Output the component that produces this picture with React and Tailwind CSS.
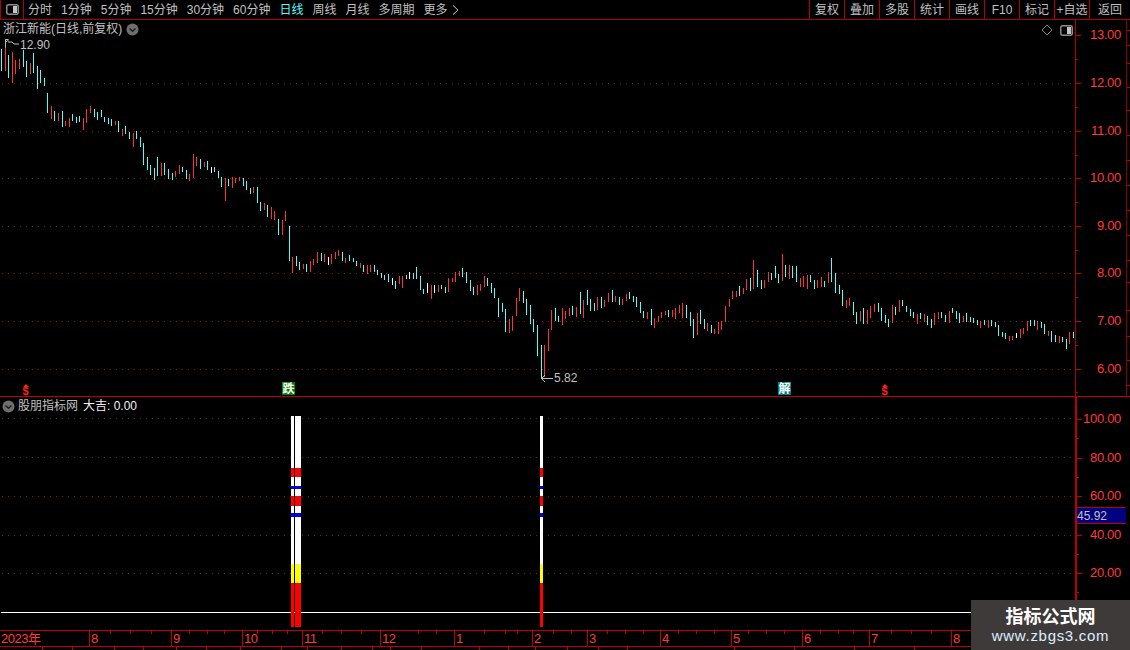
const FONT = '"Liberation Sans", "Noto Sans CJK SC", sans-serif';

// x, top, bottom in 3x crop pixels; c=cyan r=red w=white
const z7 = `4,57,122,c 16,35,125,r 26,75,145,c 37,66,158,r 46,90,132,r 58,87,117,r 70,60,110,c 80,93,140,c 91,99,131,r 100,69,129,c 112,108,177,c 122,120,160,c 133,144,167,c 142,189,248,c 154,228,266,r 164,243,272,c 175,249,272,r 187,243,290,c 196,273,288,r 208,264,291,r 217,252,272,c 229,261,279,c 238,258,276,c 250,264,300,r 259,237,279,r 271,228,249,r 283,237,261,c 292,246,270,c 304,240,261,c 313,261,276,c 325,264,282,c 334,267,288,c 346,273,285,r 355,273,306,c 367,297,318,r 376,288,312,c 388,306,327,c 400,309,351,r 409,303,327,c 421,321,351,c 430,339,405,c 442,381,420,c 451,405,435,c 463,414,450,c 472,381,438,c 484,399,438,r 493,399,435,c 505,417,447,c 517,429,450,c 526,423,441,r 538,405,432,r 547,411,426,c 559,420,447,c 568,432,453,r 580,372,444,r 589,381,408,r 601,387,417,c 613,396,411,r 622,393,420,c 634,411,429,w 643,411,426,c 655,423,444,c 664,441,471,c 676,444,513,r 685,447,468,c 697,441,474,r 706,444,459,r 718,441,453,r 730,444,468,c 739,453,480,c 751,474,492,c 760,471,489,r 772,471,519,c 781,516,543,c 793,519,540,r 802,525,561,c 814,531,567,r 823,543,570,r 835,567,615,c 847,570,615,r 856,543,573,r`;
const z10 = `28,-12,93,c 37,81,129,r 49,78,108,c 58,96,120,c 70,102,117,r 79,102,126,c 91,93,126,r 100,87,105,r 112,66,99,r 124,69,93,c 133,72,96,r 145,81,105,w 154,72,102,r 166,66,87,r 175,60,78,r 187,66,93,c 196,84,99,r 208,75,93,c 220,84,96,c 229,93,108,c 241,99,114,r 250,105,126,c 262,105,132,r 271,105,126,r 283,105,126,c 292,120,135,c 304,129,144,c 313,135,150,c 325,132,156,c 337,144,165,w 346,153,177,c 358,138,162,r 367,138,174,r 379,135,147,c 388,126,147,w 400,129,147,c 409,111,147,c 421,138,180,c 430,177,192,c 442,159,189,w 454,165,207,r 463,165,189,w 475,165,186,r 484,165,177,c 496,171,189,c 505,144,186,r 517,144,156,r 526,126,156,r 538,123,138,r 547,114,141,c 559,126,159,c 571,150,183,c 580,171,195,c 592,165,195,r 601,162,183,r 613,138,171,r 622,144,168,c 634,159,189,c 643,174,204,c 655,204,261,c`;
const z8 = `7,159,186,c 16,177,246,c 28,207,249,r 37,198,243,r 49,144,198,r 58,114,153,r 70,123,159,c 79,147,195,c 91,165,222,c 100,207,246,c 112,225,318,c 124,285,387,c 133,285,381,r 145,237,303,r 154,180,240,r 166,174,213,c 175,198,216,c 187,174,225,r 196,183,207,r 208,174,198,r 217,168,195,c 229,171,201,r 241,126,192,c 250,150,204,r 262,120,165,c 271,147,183,c 283,159,183,c 292,141,180,r 304,141,174,c 313,150,171,r 325,129,156,r 337,120,156,c 346,138,156,r 358,141,165,c 367,147,165,r 379,132,153,r 388,126,147,c 400,138,156,c 409,141,171,c 421,156,189,c 430,183,204,c 442,186,207,r 454,177,225,c 463,204,234,r 475,198,216,r 484,186,204,r 496,183,195,r 505,180,201,c 517,180,201,r 526,174,207,r 538,165,189,r 547,159,204,r 559,165,204,c 571,186,228,c 580,207,264,c 592,189,255,r 601,180,222,c 613,207,237,c 622,219,243,r 634,225,249,c 643,237,252,r 655,216,252,r 664,213,240,r 676,168,216,r 688,147,171,r 697,123,147,r 709,123,141,r 718,108,138,c 730,114,132,r 739,87,120,r 751,84,123,c 760,30,117,r 772,60,111,c 784,90,117,c 793,90,114,r 805,66,96,r 814,69,90,c 826,48,84,c 835,72,99,c`;
const z9 = `7,12,93,r 16,45,81,c 28,45,87,r 37,48,84,c 49,48,96,c 61,84,111,r 70,78,111,r 82,75,117,r 91,75,96,c 103,90,117,c 112,90,114,r 124,81,111,r 133,93,111,c 145,66,99,r 154,24,96,c 166,69,129,c 178,105,132,c 187,120,168,c 199,150,174,r 208,144,168,r 220,156,195,c 229,186,222,c 241,183,213,r 250,174,222,c 262,180,222,r 271,168,204,r 283,162,186,r 295,159,186,c 304,174,213,c 316,195,219,c 325,207,231,c 337,165,219,r 346,171,195,c 358,150,186,r 367,150,168,c 379,168,186,c 391,177,198,c 400,186,204,c 412,192,222,r 421,189,207,c 433,192,216,r 442,198,225,c 454,207,234,c 463,189,225,r 475,186,207,r 484,186,204,c 496,195,216,c 508,183,219,r 517,174,189,c 529,183,207,c 538,189,219,c 550,198,216,r 559,189,216,c 571,201,216,c 580,204,219,c 592,210,225,c 601,213,234,r 613,210,225,c 625,210,234,r 634,210,228,c 646,216,231,c 655,225,258,c 667,246,261,c 676,249,267,c 688,258,273,r 697,258,270,r 709,249,264,w 721,237,264,r 730,234,252,r 742,213,243,r 751,210,228,c 763,210,228,c 772,213,240,r 784,216,234,c 793,222,252,c 805,243,258,r 814,243,276,c 826,255,276,c 838,258,279,r 847,261,276,c 859,267,297,c 868,246,282,r 880,246,264,c`;

const COL = { c: '#54fcfc', r: '#ff3232', w: '#ffffff' };
const parse = (s, ox, oy) =>
  s.split(' ').map((t) => {
    const [x, a, b, c] = t.split(',');
    return { x: Math.floor(+x / 3) + ox, y: Math.floor(+a / 3) + oy, h: Math.round((+b - +a) / 3), c: COL[c] };
  });
const candles = [...parse(z7, 0, 30), ...parse(z10, 280, 230), ...parse(z8, 500, 250), ...parse(z9, 780, 250)];

const leftTabs = ['分时', '1分钟', '5分钟', '15分钟', '30分钟', '60分钟', '日线', '周线', '月线', '多周期', '更多'];
const rightTabs = ['复权', '叠加', '多股', '统计', '画线', 'F10', '标记', '+自选'];
const upperLabels = [['13.00', 35], ['12.00', 83], ['11.00', 131], ['10.00', 178], ['9.00', 226], ['8.00', 273], ['7.00', 321], ['6.00', 369]];
const lowerLabels = [['100.00', 419], ['80.00', 458], ['60.00', 496], ['40.00', 535], ['20.00', 573]];
const months = [['2023年', 89], ['8', 82], ['9', 71], ['10', 60], ['11', 78], ['12', 74], ['1', 78], ['2', 55], ['3', 73], ['4', 71], ['5', 71], ['6', 67], ['7', 82], ['8', 179]];
const footCells = [43, 30, 42, 29, 33, 30, 34, 41, 26, 34, 31, 18, 31, 58, 29, 27, 32, 31, 29, 107, 60, 60, 60, 60, 0];
const monthTicks = [110, 130, 151, 189, 207, 224, 257, 272, 287, 322, 341, 361, 418, 436, 484, 505, 517, 553, 571, 607, 625, 643, 678, 696, 714, 748, 766, 784, 820, 838, 853, 891, 911, 931];
const SEGS = [[416, 52, '#fff'], [468, 9, '#f00'], [477, 9, '#fff'], [486, 3, '#0000ff'], [489, 7, '#fff'], [496, 10, '#f00'], [506, 7, '#fff'], [513, 4, '#0000ff'], [517, 47, '#fff'], [564, 19, '#ff0'], [583, 44, '#f00']];

function Chevron({ className }) {
  return (
    <svg width="13" height="13" viewBox="0 0 13 13" className={className}>
      <circle cx="6.5" cy="6.5" r="6" fill="#6e6e6e" />
      <path d="M3.5 5.5 L6.5 8.2 L9.5 5.5" fill="none" stroke="#1c1c1c" strokeWidth="1.4" />
    </svg>
  );
}

function ToggleIcon() {
  return (
    <svg width="13" height="11" viewBox="0 0 13 11">
      <rect x="0.75" y="0.75" width="11.5" height="9.5" rx="2" fill="#000" stroke="#8c8c8c" strokeWidth="1.5" />
      <rect x="7" y="2" width="4" height="7" fill="#c4c4c4" />
    </svg>
  );
}

function Dots({ ys, y0 }) {
  return ys.map((y) => (
    <line key={y} x1="2" x2="1075" y1={y + 0.5 - y0} y2={y + 0.5 - y0} stroke="#8a1414" strokeDasharray="1 5" />
  ));
}

function Axis({ labels, y0, minor, width, children }) {
  return (
    <div className={`relative shrink-0 ${width}`}>
      <svg className="absolute inset-0 h-full w-full">
        {labels.map(([t, y]) => (
          <line key={t} x1="0" x2="5" y1={y + 0.5 - y0} y2={y + 0.5 - y0} stroke="#c00000" />
        ))}
        {minor.map((y) => (
          <line key={y} x1="0" x2="2" y1={y + 0.5 - y0} y2={y + 0.5 - y0} stroke="#c00000" />
        ))}
      </svg>
      {labels.map(([t, y]) => (
        <span
          key={t}
          className="absolute right-[9px] text-[13px] leading-[16px] tracking-[-0.3px] text-[#ff3a3a]"
          style={{ top: y - y0 - 8 }}
        >
          {t}
        </span>
      ))}
      {children}
    </div>
  );
}

function Signal({ cls, text, style }) {
  return (
    <span
      className={`absolute flex h-[13px] w-[13px] items-center justify-center text-[12px] font-bold leading-none text-white ${cls}`}
      style={style}
    >
      {text}
    </span>
  );
}

function Dollar({ style }) {
  return (
    <span className="absolute flex w-[7px] flex-col items-center text-[#ff2020]" style={style}>
      <span className="h-0 w-0 border-x-[3px] border-b-[3px] border-x-transparent border-b-[#ff2020]" />
      <span className="text-[11px] font-bold leading-[9px]">$</span>
    </span>
  );
}

export default function App() {
  return (
    <div className="relative flex h-[650px] w-[1130px] flex-col overflow-hidden bg-black text-[12px] text-[#c0c0c0]" style={{ fontFamily: FONT }}>
      {/* toolbar */}
      <div className="flex h-[20px] shrink-0 items-stretch border-b border-[#b00000]">
        <div className="flex w-[24px] shrink-0 items-center justify-center border-x border-[#b00000]">
          <ToggleIcon />
        </div>
        <div className="flex flex-1 items-center gap-[9px] pl-[4px] leading-none">
          {leftTabs.map((t) => (
            <span key={t} className={t === '日线' ? 'text-[#54fcfc]' : ''}>{t}</span>
          ))}
          <svg width="7" height="10" viewBox="0 0 7 10" className="-ml-[5px]">
            <path d="M1 0.5 L6 5 L1 9.5" fill="none" stroke="#c0c0c0" />
          </svg>
        </div>
        <div className="flex shrink-0">
          {rightTabs.map((t) => (
            <span key={t} className="flex w-[35px] items-center justify-center whitespace-nowrap border-l border-[#b00000] leading-none">{t}</span>
          ))}
          <span className="flex w-[41px] items-center justify-center border-l border-[#b00000] leading-none">返回</span>
        </div>
      </div>

      {/* upper panel */}
      <div className="flex h-[377px] shrink-0 border-b border-[#c00000]">
        <div className="relative w-[1076px] shrink-0 border-r border-[#b00000]">
          <svg className="block" width="1075" height="376" shapeRendering="crispEdges">
            <Dots ys={[83, 131, 178, 226, 273, 321, 369]} y0={20} />
            {candles.map((b, i) => (
              <rect key={i} x={b.x} y={b.y - 20} width="1" height={b.h} fill={b.c} />
            ))}
          </svg>
          <div className="absolute left-[3px] top-[1px] flex items-center gap-[4px] leading-[17px]">
            <span>浙江新能(日线,前复权)</span>
            <Chevron />
          </div>
          <svg className="absolute left-[4px] top-[19px]" width="15" height="9" viewBox="0 0 15 9">
            <path d="M1.5 8.5 V0.5 H4 M1.5 3.5 L5 0.5 M4 3 H8 L10 5 H15" fill="none" stroke="#c0c0c0" />
          </svg>
          <span className="absolute left-[20px] top-[19px] leading-[13px]">12.90</span>
          <svg className="absolute left-[540px] top-[354px]" width="14" height="9" viewBox="0 0 14 9">
            <path d="M5 1 L1.5 4.5 L5 8 M1.5 4.5 H13" fill="none" stroke="#c0c0c0" />
          </svg>
          <span className="absolute left-[554px] top-[352px] leading-[13px]">5.82</span>
          <svg className="absolute left-[1041px] top-[4px]" width="12" height="12" viewBox="0 0 12 12">
            <path d="M6 1 L11 6 L6 11 L1 6 Z" fill="none" stroke="#808080" />
          </svg>
          <span className="absolute left-[1060px] top-[5px] flex"><ToggleIcon /></span>
          <Dollar style={{ left: 22, top: 364 }} />
          <Signal cls="bg-[#007f00]" text="跌" style={{ left: 282, top: 362 }} />
          <Signal cls="bg-[#008080]" text="解" style={{ left: 778, top: 362 }} />
          <Dollar style={{ left: 881, top: 364 }} />
        </div>
        <Axis labels={upperLabels} y0={20} width="w-[54px]" minor={[59, 107, 155, 202, 250, 297, 345, 392]}>
          <svg className="absolute inset-0 h-full w-full">
            <line x1="50.5" x2="50.5" y1="0" y2="376" stroke="#8a0000" />
            {[10, 25, 43, 67, 90, 115, 140, 165, 190, 215, 240, 262, 290, 316, 340, 365].map((y) => (
              <line key={y} x1="51" x2="54" y1={y + 0.5} y2={y + 0.5} stroke="#b00000" />
            ))}
          </svg>
        </Axis>
      </div>

      {/* lower panel */}
      <div className="flex h-[233px] shrink-0">
        <div className="relative w-[1077px] shrink-0 border-r-2 border-[#c00000]">
          <svg className="block" width="1075" height="233" shapeRendering="crispEdges">
            <Dots ys={[418, 457, 496, 535, 573]} y0={397} />
            <rect x="1" y={612 - 397} width="1074" height="1" fill="#ffffff" />
            {[[291, 3], [295, 6], [540, 3]].map(([x, w]) =>
              SEGS.map(([y, h, c]) => (
                <rect key={`${x}-${y}`} x={x} y={y - 397} width={w} height={h} fill={c} />
              ))
            )}
          </svg>
          <div className="absolute left-[2px] top-[1px] flex items-center leading-[16px]">
            <Chevron className="mr-[3px]" />
            <span>股朋指标网</span>
            <span className="ml-[5px] text-[#f0f0f0]">大吉: 0.00</span>
          </div>
        </div>
        <Axis labels={lowerLabels} y0={397} width="w-[53px]" minor={[438, 477, 515, 554, 592]}>
          <div className="absolute left-0 top-[110px] flex h-[17px] w-[49px] items-center border-y border-[#c00000] bg-[#000080] leading-none">45.92</div>
        </Axis>
      </div>

      {/* time axis */}
      <div className="relative flex h-[17px] shrink-0 border-y border-[#c00000] text-[13px] leading-[15px] tracking-[-0.5px] text-[#ff3a3a]">
        {months.map(([t, w], i) => (
          <span key={i} className={`shrink-0 pl-[1px] ${i ? 'border-l border-[#c00000]' : ''}`} style={{ width: w }}>{t}</span>
        ))}
        <svg className="absolute inset-0 h-[3px] w-full">
          {monthTicks.map((x) => (
            <line key={x} x1={x + 0.5} x2={x + 0.5} y1="0" y2="3" stroke="#c00000" />
          ))}
        </svg>
      </div>

      {/* clipped status row */}
      <div className="flex flex-1">
        {footCells.map((w, i) => (
          <span key={i} className="shrink-0 border-r border-[#c00000]" style={{ width: w }} />
        ))}
      </div>

      {/* watermark */}
      <div className="absolute bottom-0 right-0 flex h-[50px] w-[159px] flex-col items-center bg-[#3f3a3a]">
        <span className="mt-[3px] text-[18px] font-bold leading-[24px] text-white" style={{ fontFamily: '"Noto Sans CJK SC", sans-serif' }}>指标公式网</span>
        <span className="text-[15px] leading-[18px] tracking-[0.7px] text-[#dceeff]">www.zbgs3.com</span>
      </div>
    </div>
  );
}
